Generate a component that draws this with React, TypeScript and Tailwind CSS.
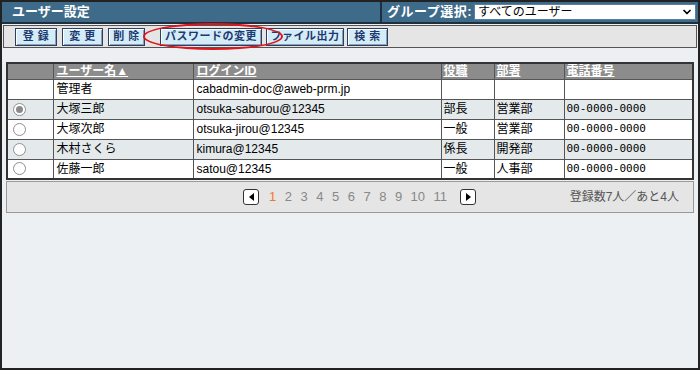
import { ChevronDown } from 'lucide-react';

const font = { fontFamily: '"Liberation Sans", "Noto Sans CJK JP", sans-serif' };

const buttons = [
  { label: '登 録', cls: 'w-[42px]' },
  { label: '変 更', cls: 'w-[41px] ml-[5px]' },
  { label: '削 除', cls: 'w-[37px] ml-[5px]' },
  { label: 'パスワードの変更', cls: 'w-[102px] ml-[15px]', circled: true },
  { label: 'ファイル出力', cls: 'w-[78px] ml-[4px]' },
  { label: '検 索', cls: 'w-[41px] ml-[3px]' },
];

const users = [
  { radio: false, name: '管理者', login: 'cabadmin-doc@aweb-prm.jp', role: '', dept: '', tel: '' },
  { radio: true, checked: true, name: '大塚三郎', login: 'otsuka-saburou@12345', role: '部長', dept: '営業部', tel: '00-0000-0000' },
  { radio: true, name: '大塚次郎', login: 'otsuka-jirou@12345', role: '一般', dept: '営業部', tel: '00-0000-0000' },
  { radio: true, name: '木村さくら', login: 'kimura@12345', role: '係長', dept: '開発部', tel: '00-0000-0000' },
  { radio: true, name: '佐藤一郎', login: 'satou@12345', role: '一般', dept: '人事部', tel: '00-0000-0000' },
];

function Radio({ checked }: { checked?: boolean }) {
  return (
    <span className="flex h-[13px] w-[13px] items-center justify-center rounded-full border border-[#8f8f8f] bg-white">
      {checked && <span className="h-[7px] w-[7px] rounded-full bg-[#8a8a8a]" />}
    </span>
  );
}

export default function App() {
  return (
    <div className="h-[370px] w-[700px] border-2 border-[#222] bg-[#edf0f3] text-[12px]" style={font}>
      {/* Header */}
      <div className="flex h-[22px] items-center justify-between border-b-2 border-[#1f2f3c] bg-[#3f6b8b]">
        <span className="pl-[10px] text-[13px] font-bold text-white">ユーザー設定</span>
        <div className="flex h-full items-center gap-[2px] border-l-2 border-[#1f2f3c] pl-[5px] pr-[2px]">
          <span className="text-[13px] font-bold tracking-[0.5px] text-white">グループ選択:</span>
          <div className="flex h-[16px] w-[222px] items-center justify-between border border-[#5a7fa0] bg-white pl-[3px] pr-[2px] text-[12px] text-black">
            <span>すべてのユーザー</span>
            <ChevronDown className="h-[12px] w-[12px]" strokeWidth={3.5} />
          </div>
        </div>
      </div>

      {/* Toolbar */}
      <div className="mx-[1px] mt-[1px] flex h-[23px] items-center border border-[#555] bg-[#e5e5e5] pl-[11px]">
        {buttons.map((b) => (
          <div key={b.label} className={`relative shrink-0 ${b.cls}`}>
            <button className="flex h-[18px] w-full items-center justify-center whitespace-nowrap border border-[#2c3f60] bg-[#d4ecf7] text-[11px] font-bold tracking-[0.5px] text-[#1d3a70] shadow-[inset_1px_1px_0_#ffffff,inset_-1px_-1px_0_#8aa0b8]">
              {b.label}
            </button>
            {b.circled && (
              <span className="pointer-events-none absolute -top-[5px] -right-[21px] -bottom-[4px] -left-[17px] z-10 block rounded-[50%] border-[2.5px] border-[#e0141c]" />
            )}
          </div>
        ))}
      </div>

      {/* Table */}
      <div className="mx-[4px] mt-[14px]">
        <table className="w-full border-collapse border-2 border-[#333] text-[12px] leading-[16px] text-black">
          <thead>
            <tr className="h-[16px] bg-[#8c8c8c] text-left text-[12px] font-bold leading-[13px] text-white">
              <th className="w-[46px] border border-[#555] p-0" />
              <th className="w-[140px] border border-[#555] p-0 pl-[3px] underline">ユーザー名▲</th>
              <th className="w-[248px] border border-[#555] p-0 pl-[3px] underline">ログインID</th>
              <th className="w-[53px] border border-[#555] p-0 pl-[2px] underline">役職</th>
              <th className="w-[70px] border border-[#555] p-0 pl-[2px] underline">部署</th>
              <th className="border border-[#555] p-0 pl-[2px] underline">電話番号</th>
            </tr>
          </thead>
          <tbody>
            {users.map((u, i) => (
              <tr key={u.login} className={`h-[20px] ${i % 2 === 1 ? 'bg-[#e4e9eb]' : 'bg-white'}`}>
                <td className="border border-[#555] p-0">
                  <div className="flex pl-[5px]">{u.radio && <Radio checked={u.checked} />}</div>
                </td>
                <td className="border border-[#555] p-0 pl-[3px]">{u.name}</td>
                <td className="border border-[#555] p-0 pl-[3px]">{u.login}</td>
                <td className="border border-[#555] p-0 pl-[2px]">{u.role}</td>
                <td className="border border-[#555] p-0 pl-[2px]">{u.dept}</td>
                <td className="border border-[#555] p-0 pl-[2px]" style={{ fontFamily: '"DejaVu Sans Mono", monospace', fontSize: 11 }}>
                  {u.tel}
                </td>
              </tr>
            ))}
          </tbody>
        </table>

        {/* Pagination */}
        <div className="mt-[1px] flex h-[32px] items-center border border-[#999] bg-[#e5e5e5] pr-[14px]">
          <div className="flex items-center pl-[236px] text-[13px] text-[#888]">
            <span className="flex h-[16px] w-[16px] items-center justify-center rounded-[3px] border border-[#333] bg-white">
              <span className="h-0 w-0 border-y-[4px] border-r-[5px] border-y-transparent border-r-black" />
            </span>
            <div className="ml-[10px] flex items-center gap-[8.5px]">
              <span className="text-[#f07a2a]">1</span>
              {[2, 3, 4, 5, 6, 7, 8, 9, 10, 11].map((n) => (
                <span key={n}>{n}</span>
              ))}
            </div>
            <span className="ml-[13px] flex h-[16px] w-[16px] items-center justify-center rounded-[3px] border border-[#333] bg-white">
              <span className="h-0 w-0 border-y-[4px] border-l-[5px] border-y-transparent border-l-black" />
            </span>
          </div>
          <span className="ml-auto text-[12px] text-[#555]">登録数7人／あと4人</span>
        </div>
      </div>
    </div>
  );
}
